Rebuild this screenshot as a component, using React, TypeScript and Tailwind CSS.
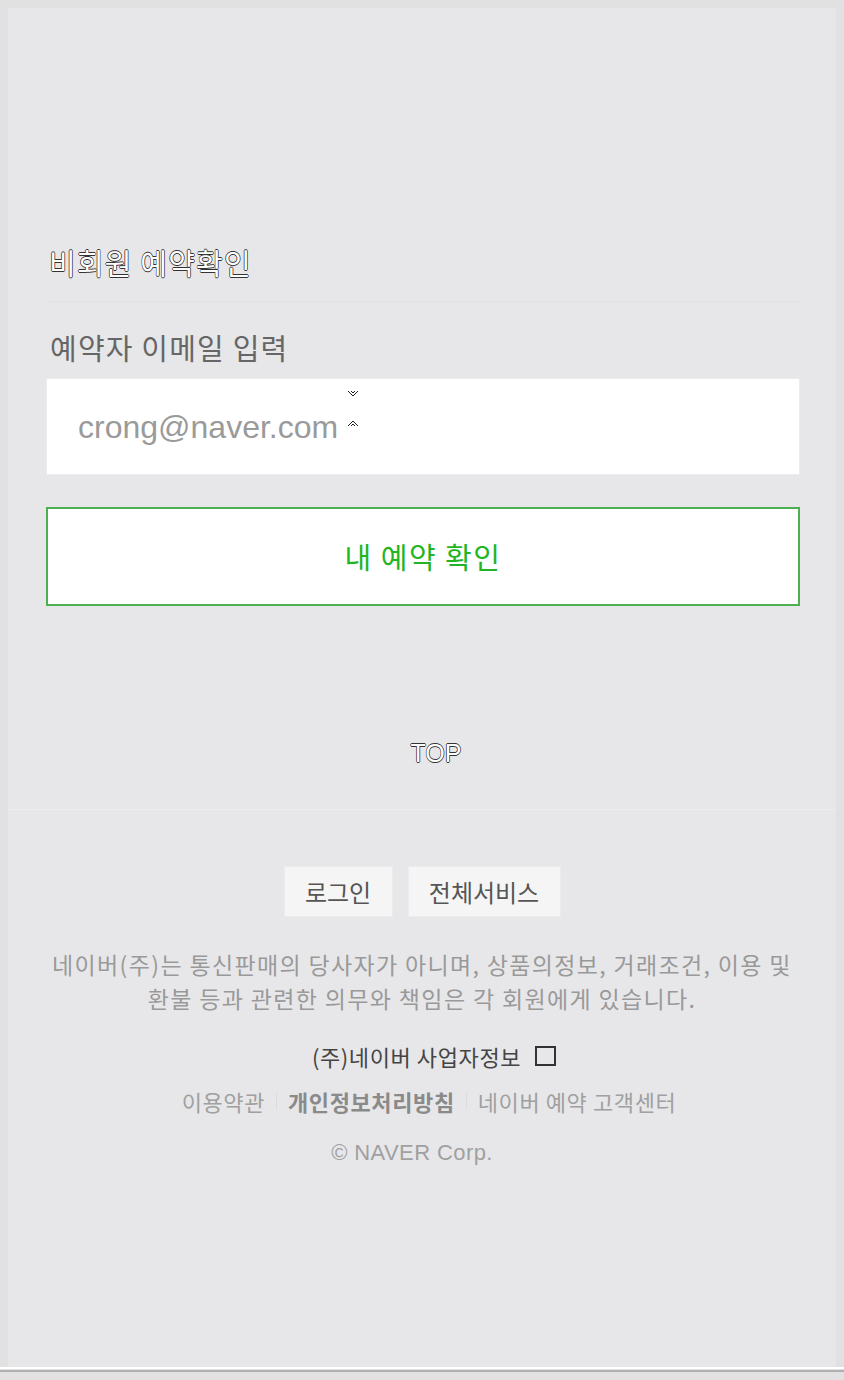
import React from "react";

const KR = "font-['Noto_Sans_CJK_KR','Noto_Sans',sans-serif]";

export default function App() {
  const outline =
    "text-white [text-shadow:0.7px_0_0_#333,-0.7px_0_0_#333,0_0.7px_0_#333,0_-0.7px_0_#333]";
  return (
    <div className={`min-h-[1380px] w-[844px] bg-[#e1e1e1] pt-2 ${KR}`}>
      <div className="mx-2 h-[1359px] bg-[#e7e7e9] pt-[236px]">
        <div className="ml-[38px] mr-[36px]">
          <h2 className={`pl-[3px] text-[29px] leading-[36px] font-normal tracking-[1.2px] ${outline}`}>
            비회원 예약확인
          </h2>
          <div className="mt-[21px] h-px bg-[#e2e2e4]" />
          <div className="mt-[27px] pl-[4px] text-[29px] leading-[36px] tracking-[1.2px] text-[#666]">
            예약자 이메일 입력
          </div>
          <div className="relative mt-[13px] flex h-[97px] items-center border border-[#ececec] bg-white pl-[31px]">
            <span className="font-['Liberation_Sans',Arial,sans-serif] text-[32px] text-[#9a9a9a]">
              crong@naver.com
            </span>
            <svg
              className="absolute left-[300px] top-[11px]"
              width="12"
              height="8"
              viewBox="0 0 12 8"
            >
              <path d="M1 1 L6 6 L11 1 M4 1 L6 3 L8 1" stroke="#222" strokeWidth="1" fill="none" />
            </svg>
            <svg
              className="absolute left-[300px] top-[40px]"
              width="12"
              height="8"
              viewBox="0 0 12 8"
            >
              <path d="M1 7 L6 2 L11 7 M4 7 L6 5 L8 7" stroke="#222" strokeWidth="1" fill="none" />
            </svg>
          </div>
          <button className="mt-[32px] flex h-[99px] w-full items-center justify-center border-2 border-[#4caf50] bg-white text-[29px] tracking-[1.5px] text-[#22b522]">
            내 예약 확인
          </button>
        </div>
        <div className="mt-[132px] flex justify-center pl-[28px]">
          <span className={`font-['Liberation_Sans',Arial,sans-serif] text-[25px] leading-[30px] ${outline}`}>
            TOP
          </span>
        </div>
        <div className="mt-[41px] h-px bg-[#ececee]" />
        <div className="mt-[56px] flex justify-center gap-[15px]">
          <button className="h-[51px] w-[109px] border border-[#ececec] bg-[#f5f5f6] text-[24px] text-[#555]">
            로그인
          </button>
          <button className="h-[51px] w-[153px] border border-[#ececec] bg-[#f5f5f6] text-[24px] text-[#555]">
            전체서비스
          </button>
        </div>
        <p className="mx-auto mt-[30px] w-[800px] text-center text-[23px] leading-[34px] text-[#999] tracking-[1.35px]">
          네이버(주)는 통신판매의 당사자가 아니며, 상품의정보, 거래조건, 이용 및<br />
          환불 등과 관련한 의무와 책임은 각 회원에게 있습니다.
        </p>
        <div className="mt-[26px] flex items-center justify-center gap-[14px] pl-[24px] text-[22px] leading-[30px] tracking-[0.6px] text-[#444]">
          <span>(주)네이버 사업자정보</span>
          <span className="inline-block h-[20px] w-[21px] border-2 border-[#333]" />
        </div>
        <div className="mt-[15px] flex items-center justify-center pl-[14px] text-[22px] leading-[30px] tracking-[0.6px] text-[#a0a0a0]">
          <span>이용약관</span>
          <span className="mx-[11px] h-[18px] w-px bg-[#dcdcdc]" />
          <span className="font-bold text-[#8a8a8a]">개인정보처리방침</span>
          <span className="mx-[11px] h-[18px] w-px bg-[#dcdcdc]" />
          <span>네이버 예약 고객센터</span>
        </div>
        <div className="mt-[22px] flex justify-center pr-[20px] font-['Liberation_Sans',Arial,sans-serif] text-[22px] leading-[30px] tracking-[0.4px] text-[#a0a0a0]">
          © NAVER Corp.
        </div>
      </div>
      <div className="h-[2px] bg-white" />
      <div className="mt-[1px] h-[2px] bg-[#b0b0b0]" />
    </div>
  );
}
